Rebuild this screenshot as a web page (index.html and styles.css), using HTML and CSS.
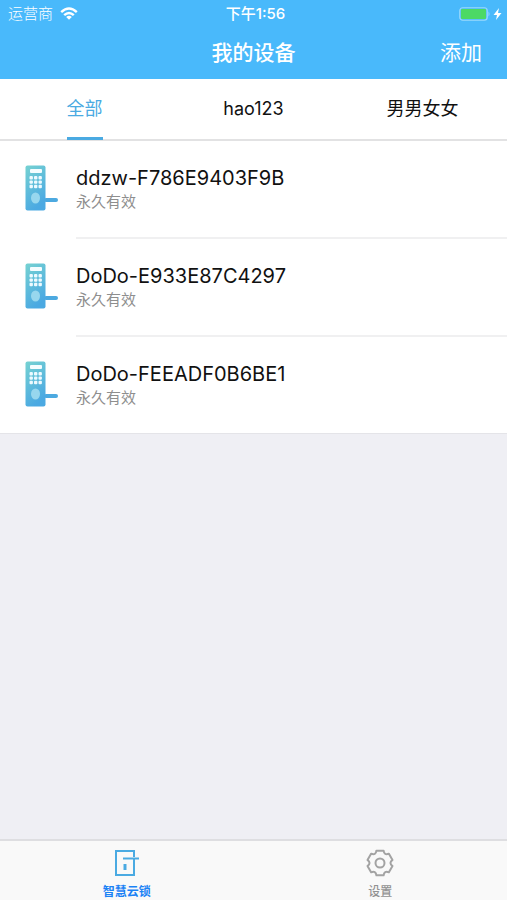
FILE: index.html
```html
<!DOCTYPE html>
<html lang="zh-CN">
<head>
<meta charset="utf-8">
<meta name="viewport" content="width=device-width, initial-scale=1">
<title>我的设备</title>
<link rel="stylesheet" href="styles.css">
</head>
<body>
<svg class="defs" aria-hidden="true">
  <defs>
    <linearGradient id="lock-fill" x1="0" y1="0" x2="0.4" y2="1">
      <stop offset="0" stop-color="#76d2d2"/>
      <stop offset="1" stop-color="#4ba9e2"/>
    </linearGradient>
    <symbol id="lock" viewBox="0 0 34 46">
      <rect x="19" y="33" width="14" height="4" rx="2" fill="#4ca9e0"/>
      <rect x="0.500" y="0.500" width="20" height="45" rx="2" fill="url(#lock-fill)"/>
      <rect x="5" y="4" width="12" height="4" rx="1" fill="#f4fdff"/>
      <g fill="#eefaff">
        <rect x="4.500" y="11" width="3.400" height="3.400" rx="1"/><rect x="9" y="11" width="3.400" height="3.400" rx="1"/><rect x="13.500" y="11" width="3.400" height="3.400" rx="1"/>
        <rect x="4.500" y="15.400" width="3.400" height="3.400" rx="1"/><rect x="9" y="15.400" width="3.400" height="3.400" rx="1"/><rect x="13.500" y="15.400" width="3.400" height="3.400" rx="1"/>
        <rect x="4.500" y="19.800" width="3.400" height="3.400" rx="1"/><rect x="9" y="19.800" width="3.400" height="3.400" rx="1"/><rect x="13.500" y="19.800" width="3.400" height="3.400" rx="1"/>
      </g>
      <ellipse cx="10.500" cy="33" rx="4.500" ry="5.500" fill="#97d7ee"/>
    </symbol>
  </defs>
</svg>
<div class="app">
  <header class="top">
    <div class="status">
      <div class="carrier">
        <span>运营商</span>
        <svg class="wifi" viewBox="0 0 18 13" fill="none" stroke="#fff" stroke-width="2.400">
          <path d="M1.200 5.200Q9-2 16.800 5.200"/>
          <path d="M4.200 8.200Q9 3.600 13.800 8.200"/>
          <path d="M9 12.800L6.200 10Q9 7.600 11.800 10Z" fill="#fff" stroke="none"/>
        </svg>
      </div>
      <div class="clock">下午1:56</div>
      <svg class="battery" viewBox="0 0 44 14">
        <rect x="0.750" y="0.750" width="27.500" height="12.500" rx="3" fill="none" stroke="#9ad9fc" stroke-width="1.200"/>
        <rect x="2" y="2" width="25" height="10" rx="1" fill="#4cd964"/>
        <path d="M29.500 4.500Q31.500 7 29.500 9.500Z" fill="#9ad9fc"/>
        <path d="M40 1L34.500 8H38L37 13L42.500 6H39Z" fill="#fff"/>
      </svg>
    </div>
    <div class="nav">
      <h1>我的设备</h1>
      <button class="add" type="button">添加</button>
    </div>
  </header>
  <nav class="tabs">
    <button class="tab active" type="button"><span>全部</span></button>
    <button class="tab" type="button"><span>hao123</span></button>
    <button class="tab" type="button"><span>男男女女</span></button>
  </nav>
  <main>
    <ul class="devices">
      <li>
        <svg class="lock"><use href="#lock"/></svg>
        <div class="info"><h2>ddzw-F786E9403F9B</h2><p>永久有效</p></div>
      </li>
      <li>
        <svg class="lock"><use href="#lock"/></svg>
        <div class="info"><h2>DoDo-E933E87C4297</h2><p>永久有效</p></div>
      </li>
      <li>
        <svg class="lock"><use href="#lock"/></svg>
        <div class="info"><h2>DoDo-FEEADF0B6BE1</h2><p>永久有效</p></div>
      </li>
    </ul>
  </main>
  <nav class="bottom">
    <a class="item current" href="#locks">
      <svg viewBox="0 0 28 28" fill="none" stroke="#4aaae2" stroke-width="2">
        <path d="M21 8V2H3V26H21V10"/>
        <path d="M10 9.500H26"/>
        <path d="M12 15V21" stroke-width="3"/>
      </svg>
      <span>智慧云锁</span>
    </a>
    <a class="item" href="#settings">
      <svg viewBox="-14 -14 28 28" fill="none" stroke="#a3a3a3" stroke-width="2" stroke-linejoin="round">
        <path d="M-3.600-12.300H3.600Q4.200-7.300 8.900-9.300L12.500-3.100Q8.400 0 12.500 3.100L8.900 9.300Q4.200 7.300 3.600 12.300H-3.600Q-4.200 7.300-8.900 9.300L-12.500 3.100Q-8.400 0-12.500-3.100L-8.900-9.300Q-4.200-7.300-3.600-12.300Z"/>
        <circle r="4.500"/>
      </svg>
      <span>设置</span>
    </a>
  </nav>
</div>
</body>
</html>
```
FILE: styles.css
```css
* {
  box-sizing: border-box;
}

body {
  margin: 0;
  background: #efeff4;
  color: #111;
  font-family: Inter, "Noto Sans CJK SC", sans-serif;
}

button {
  border: 0;
  padding: 0;
  background: none;
  color: inherit;
  font: inherit;
}

h1, h2, p, ul {
  margin: 0;
  padding: 0;
  font-weight: 400;
}

.defs {
  position: absolute;
  width: 0;
  height: 0;
}

.app {
  display: flex;
  flex-direction: column;
  min-height: 100vh;
}

.top {
  background: #49b9fb;
  color: #fff;
}

.status,
.nav {
  display: grid;
  grid-template-columns: 1fr auto 1fr;
  align-items: center;
}

.status {
  height: 27px;
  padding: 0 4px 0 8px;
  font-size: 15px;
  line-height: 27px;
}

.carrier {
  display: flex;
  align-items: center;
  gap: 7px;
  font-weight: 300;
}

.wifi {
  width: 18px;
  height: 13px;
}

.clock {
  font-size: 15px;
  font-weight: 500;
}

.battery {
  justify-self: end;
  width: 44px;
  height: 14px;
}

.nav {
  height: 52px;
  padding: 0 25px 4px;
  font-size: 21px;
}

.nav h1 {
  grid-column: 2;
  font-size: 21px;
  font-weight: 500;
}

.add {
  justify-self: end;
}

.tabs {
  display: grid;
  grid-template-columns: repeat(3, 1fr);
  height: 62px;
  border-bottom: 2px solid #e2e2e3;
  background: #fff;
  font-size: 18px;
}

.tab {
  display: flex;
  justify-content: center;
}

.tab span {
  height: 61px;
  line-height: 60px;
}

.tab.active span {
  border-bottom: 3px solid #4aaae2;
  color: #4aaae2;
}

main {
  flex: 1;
}

.devices {
  border-bottom: 1px solid #e4e4e8;
  background: #fff;
  list-style: none;
}

.devices li {
  display: flex;
  gap: 17px;
  padding-left: 25px;
}

.lock {
  width: 34px;
  height: 46px;
  margin-top: 24px;
}

.info {
  flex: 1;
  height: 98px;
  padding-top: 24px;
  border-bottom: 2px solid #f0f0f1;
}

li:last-child .info {
  height: 96px;
  border-bottom: 0;
}

.info h2 {
  font-size: 20px;
  line-height: 26px;
}

.info p {
  color: #8e8e8e;
  font-size: 15px;
  line-height: 22px;
}

.bottom {
  display: grid;
  grid-template-columns: 1fr 1fr;
  height: 61px;
  border-top: 2px solid #dedee1;
  background: #f9f9f9;
}

.item {
  display: flex;
  flex-direction: column;
  align-items: center;
  padding-top: 8px;
  color: #929292;
  font-size: 12px;
  font-weight: 500;
  line-height: 18px;
  text-decoration: none;
}

.item svg {
  width: 28px;
  height: 28px;
  margin-bottom: 6px;
}

.current {
  color: #1b82f5;
  font-weight: 700;
}
```
